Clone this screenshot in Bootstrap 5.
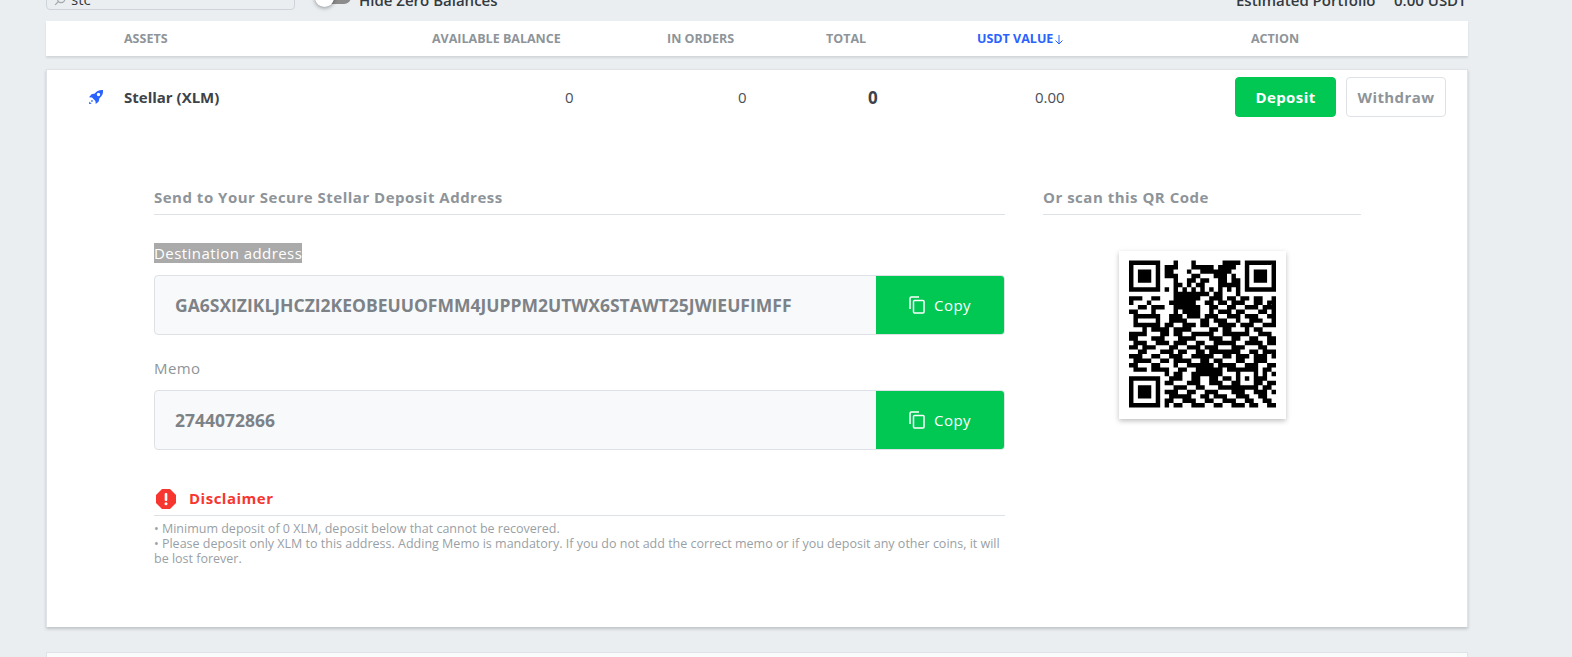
<!DOCTYPE html>
<html lang="en">
<head>
<meta charset="utf-8">
<title>Wallet</title>
<link href="https://cdn.jsdelivr.net/npm/bootstrap@5.3.0/dist/css/bootstrap.min.css" rel="stylesheet">
<style>
html,body{height:657px;overflow:hidden}
body{background:#eaeef1;font-family:"Open Sans",sans-serif;color:#343a40}
.page-wrap{margin:-22px 0 0 46px;width:1422px}
.top-strip{height:32px;margin-bottom:11px}
.search-box{width:249px;height:32px;border:1px solid #ced4da;border-radius:4px;padding-left:7px;gap:5px;font-size:15px;line-height:1;color:#343a40}
.search-box svg{margin-bottom:3px}
.search-val{padding-bottom:2px}
.switch-wrap{margin-left:20px;width:44px;height:32px;position:relative}
.switch-track{position:absolute;left:6px;top:12px;width:30px;height:14px;border-radius:7px;background:#8c8c8c}
.switch-knob{position:absolute;left:0;top:10px;width:19px;height:19px;border-radius:50%;background:#fff;box-shadow:0 1px 4px rgba(0,0,0,.4)}
.strip-text{font-size:15px;font-weight:600;color:#343a40;padding-top:12px;line-height:20px;height:32px;white-space:nowrap}
.est-label{margin-left:auto;width:158px}
.est-value{width:74px}
.head-bar{height:35px;padding-top:2px;background:#fff;box-shadow:0 2px 2px rgba(0,0,0,.1);margin-bottom:13px;font-size:12.5px;font-weight:700;color:#8e9499}
.head-bar>div{white-space:nowrap}
.h1c{width:78px}.h2c{width:308px}.h3c{width:235px}.h4c{width:159px}.h5c{width:151px}.h6c{width:274px}
.sort-on{color:#2962ff}
.sort-on svg{margin-left:1px}
.coin-card{height:558px;background:#fff;border:1px solid #dfe3e7;border-bottom:0;box-shadow:0 2px 3px rgba(0,0,0,.18);margin-bottom:25px}
.coin-row{height:54px;font-size:15px;color:#495057}
.r1c{width:77px;padding-left:41px}.r2c{width:441px;font-weight:700;color:#3d4349}
.r3c{width:173px}.r4c{width:130px}.r5c{width:167px;padding-top:2px;font-size:17px;font-weight:700;color:#3d4349}.r6c{width:200px}
.act-btn{height:40px;font-size:15px;font-weight:700;letter-spacing:.4px;border-radius:4px;padding:0;line-height:38px}
.btn-dep{width:101px;background:#00c853;border:1px solid #00c853;color:#fff;margin-right:10px}
.btn-wd{width:100px;background:#fff;border:1px solid #dee2e6;color:#8e9499}
.detail-area{margin:64px 0 0 107px;gap:38px}
.detail-main{width:851px}
.detail-side{width:318px}
.sec-title{font-size:15px;font-weight:700;letter-spacing:.5px;color:#8e9499;border-bottom:1px solid #dee2e6;height:27px;line-height:19px}
.fld-label{font-size:15px;letter-spacing:.44px;color:#8e9499;line-height:20px;margin:0}
.memo-label{margin-top:23px}
.fld-label-sel{background:#aaa;color:#fff;display:inline-block}
.addr-box{height:60px;border:1px solid #dee2e6;border-radius:4px;background:#f8f9fa;overflow:hidden;margin-top:12px}
.addr-val{font-size:17.5px;font-weight:700;color:#7d8287;padding-left:20px;white-space:nowrap}
.copy-btn{width:128px;background:#00c853;color:#fff;font-size:15px;letter-spacing:.4px;gap:9px;border-radius:0}
.warn-head{margin-top:35px;height:31px;border-bottom:1px solid #dee2e6;padding:0 0 3px 2px;gap:13px;color:#f7362f;font-size:15px;font-weight:700;letter-spacing:.5px}
.warn-text{font-size:12.5px;line-height:15px;color:#999fa5;margin:5px 0 0}
.qr-tile{width:167px;height:168px;margin:36px auto 0;background:#fff;box-shadow:0 2px 5px rgba(0,0,0,.25);padding:9px 10px}
.next-card{height:5px;background:#fafbfb;border:1px solid #dfe3e7;border-bottom:0}
</style>
</head>
<body>
<div class="page-wrap">
  <div class="top-strip d-flex">
    <div class="search-box d-flex align-items-end">
      <svg width="12" height="12" viewBox="0 0 16 16" fill="none" stroke="#a4a9ad" stroke-width="1.6"><circle cx="9.500" cy="6.500" r="5"/><path d="M6 10 1.500 14.500"/></svg>
      <span class="search-val">stc</span>
    </div>
    <div class="switch-wrap"><div class="switch-track"></div><div class="switch-knob"></div></div>
    <div class="strip-text">Hide Zero Balances</div>
    <div class="strip-text est-label">Estimated Portfolio</div>
    <div class="strip-text est-value">0.00 USDT</div>
  </div>

  <div class="head-bar d-flex align-items-center">
    <div class="h1c"></div><div class="h2c">ASSETS</div><div class="h3c">AVAILABLE BALANCE</div><div class="h4c">IN ORDERS</div><div class="h5c">TOTAL</div>
    <div class="h6c sort-on">USDT VALUE<svg width="10" height="11" viewBox="0 0 10 11" fill="none" stroke="#2962ff" stroke-width="1"><path d="M5 1v9M1.500 6.500 5 10l3.500-3.500"/></svg></div>
    <div>ACTION</div>
  </div>

  <div class="coin-card">
    <div class="coin-row d-flex align-items-center">
      <div class="r1c d-flex"><svg width="16" height="16" viewBox="0 0 16 16" fill="#2962ff"><path d="M15 1c-3.500-.4-6.400 1-8.200 3.600L3.600 5.300 1 8.200l3 .4 3.400 3.400.4 3L10.700 12.400l.7-3.200C14 7.300 15.400 4.500 15 1zM10.500 7.200a1.700 1.700 0 1 1 0-3.400 1.700 1.700 0 0 1 0 3.400z"/><path d="M1 15l.4-2.300.9.300-.2 1 1-.2.300.9z"/><rect x="3.200" y="11.200" width="1.500" height="1.500"/></svg></div>
      <div class="r2c">Stellar (XLM)</div>
      <div class="r3c">0</div>
      <div class="r4c">0</div>
      <div class="r5c">0</div>
      <div class="r6c">0.00</div>
      <button type="button" class="btn act-btn btn-dep">Deposit</button>
      <button type="button" class="btn act-btn btn-wd">Withdraw</button>
    </div>

    <div class="detail-area d-flex">
      <div class="detail-main">
        <div class="sec-title">Send to Your Secure Stellar Deposit Address</div>
        <div class="mt-4 pt-1"><p class="fld-label"><span class="fld-label-sel">Destination address</span></p></div>
        <div class="addr-box d-flex">
          <div class="addr-val flex-grow-1 d-flex align-items-center">GA6SXIZIKLJHCZI2KEOBEUUOFMM4JUPPM2UTWX6STAWT25JWIEUFIMFF</div>
          <div class="copy-btn d-flex align-items-center justify-content-center"><svg width="16" height="18" viewBox="0 0 16 18" fill="none" stroke="#fff" stroke-width="1.5"><path d="M1 13V2.500A1.500 1.500 0 0 1 2.500 1H10"/><rect x="4.500" y="4.500" width="10.500" height="12.500" rx="1"/></svg><span>Copy</span></div>
        </div>
        <p class="fld-label memo-label">Memo</p>
        <div class="addr-box d-flex">
          <div class="addr-val flex-grow-1 d-flex align-items-center">2744072866</div>
          <div class="copy-btn d-flex align-items-center justify-content-center"><svg width="16" height="18" viewBox="0 0 16 18" fill="none" stroke="#fff" stroke-width="1.5"><path d="M1 13V2.500A1.500 1.500 0 0 1 2.500 1H10"/><rect x="4.500" y="4.500" width="10.500" height="12.500" rx="1"/></svg><span>Copy</span></div>
        </div>
        <div class="warn-head d-flex align-items-center">
          <svg width="20" height="20" viewBox="0 0 20 20"><path fill="#f7362f" d="M6 0h8l6 6v8l-6 6H6l-6-6V6z"/><rect x="8.700" y="4" width="2.600" height="8" rx="1" fill="#fff"/><circle cx="10" cy="14.800" r="1.500" fill="#fff"/></svg>
          <span>Disclaimer</span>
        </div>
        <p class="warn-text">• Minimum deposit of 0 XLM, deposit below that cannot be recovered.<br>• Please deposit only XLM to this address. Adding Memo is mandatory. If you do not add the correct memo or if you deposit any other coins, it will be lost forever.</p>
      </div>
      <div class="detail-side">
        <div class="sec-title">Or scan this QR Code</div>
        <div class="qr-tile"><svg width="147" height="148" viewBox="0 0 33 33"><path id="qrPath" fill="#000"/></svg></div>
      </div>
    </div>
  </div>
  <div class="next-card"></div>
</div>
<script src="https://cdn.jsdelivr.net/npm/bootstrap@5.3.0/dist/js/bootstrap.bundle.min.js"></script>
<script>
var rows=[
"11111110001 00010000001 11101111111",
"10000010111 00011111011 11001000001",
"10111010110 00100111111 10001011101",
"10111010111 00011000111 01001011101",
"10111010001 00110110011 01101011101",
"10000010001 10101100011 11101000001",
"11111110101 01010101010 10101111111",
"00000000001 11111110110 00100000000",
"11100110001 11111001110 11011011001",
"10001000011 11110011011 01110011011",
"00110111001 11111001100 11001110111",
"11000100001 01111001011 10110001101",
"01111110011 10111011100 11101110011",
"01000010011 11000110111 00100111001",
"01111110110 01110110011 11011100111",
"00010111101 11100001101 10001011000",
"11110001101 10011111001 11111001110",
"11000111000 11110001110 01100110011",
"01110011101 11001100111 11001111011",
"11011100011 00111011100 01110001100",
"00110001110 11001101111 11100110111",
"11100110011 10011111001 10111011101",
"01111001101 11100110110 00110011100",
"11000110001 00111111011 11001110011",
"01110111100 11001111110 11111110110",
"00000000101 10011111110 00100010101",
"11111110011 10011001101 10101011100",
"10000010110 00111001110 01100011011",
"10111010001 11001100011 11111110110",
"10111010111 00110011100 01110011101",
"10111010011 11100110111 00111001100",
"10000010110 01110011001 11001100110",
"11111110101 10011100110 01110110011"
];
var d="";
rows.forEach(function(s,y){var r=s.replace(/ /g,"");for(var x=0;x<33;x++){if(r[x]==="1"){d+="M"+x+" "+y+"h1v1h-1z";}}});
document.getElementById("qrPath").setAttribute("d",d);
</script>
</body>
</html>
